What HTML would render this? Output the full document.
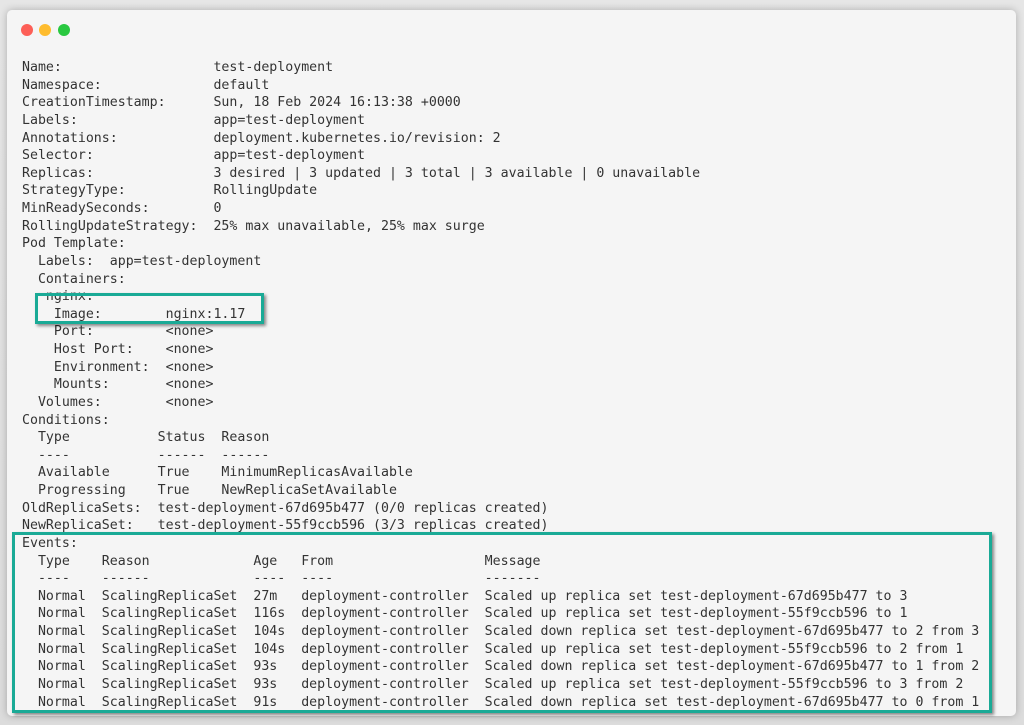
<!DOCTYPE html>
<html><head><style>
html,body{margin:0;padding:0;width:1024px;height:725px;overflow:hidden;background:linear-gradient(#e6e6e6,#dcdcdc);}
.win{position:absolute;left:7px;top:10px;width:1009px;height:706px;background:#f5f5f5;border-radius:5px;box-shadow:0 0 8px rgba(0,0,0,.25);}
.dot{position:absolute;top:14px;width:12px;height:12px;border-radius:50%;}
pre{position:absolute;left:15px;top:49px;margin:0;font-family:"DejaVu Sans Mono","Liberation Mono",monospace;font-size:13.25px;line-height:17.62px;color:#333;}
.box{position:absolute;border:3px solid #1aaa96;box-shadow:2px 2px 3px rgba(0,0,0,.45);}
</style></head><body>
<div class="win">
<div class="dot" style="left:14px;background:#fd5f57"></div>
<div class="dot" style="left:32px;background:#febc2e"></div>
<div class="dot" style="left:51px;background:#29c840"></div>
<pre>Name:                   test-deployment
Namespace:              default
CreationTimestamp:      Sun, 18 Feb 2024 16:13:38 +0000
Labels:                 app=test-deployment
Annotations:            deployment.kubernetes.io/revision: 2
Selector:               app=test-deployment
Replicas:               3 desired | 3 updated | 3 total | 3 available | 0 unavailable
StrategyType:           RollingUpdate
MinReadySeconds:        0
RollingUpdateStrategy:  25% max unavailable, 25% max surge
Pod Template:
  Labels:  app=test-deployment
  Containers:
   nginx:
    Image:        nginx:1.17
    Port:         &lt;none&gt;
    Host Port:    &lt;none&gt;
    Environment:  &lt;none&gt;
    Mounts:       &lt;none&gt;
  Volumes:        &lt;none&gt;
Conditions:
  Type           Status  Reason
  ----           ------  ------
  Available      True    MinimumReplicasAvailable
  Progressing    True    NewReplicaSetAvailable
OldReplicaSets:  test-deployment-67d695b477 (0/0 replicas created)
NewReplicaSet:   test-deployment-55f9ccb596 (3/3 replicas created)
Events:
  Type    Reason             Age   From                   Message
  ----    ------             ----  ----                   -------
  Normal  ScalingReplicaSet  27m   deployment-controller  Scaled up replica set test-deployment-67d695b477 to 3
  Normal  ScalingReplicaSet  116s  deployment-controller  Scaled up replica set test-deployment-55f9ccb596 to 1
  Normal  ScalingReplicaSet  104s  deployment-controller  Scaled down replica set test-deployment-67d695b477 to 2 from 3
  Normal  ScalingReplicaSet  104s  deployment-controller  Scaled up replica set test-deployment-55f9ccb596 to 2 from 1
  Normal  ScalingReplicaSet  93s   deployment-controller  Scaled down replica set test-deployment-67d695b477 to 1 from 2
  Normal  ScalingReplicaSet  93s   deployment-controller  Scaled up replica set test-deployment-55f9ccb596 to 3 from 2
  Normal  ScalingReplicaSet  91s   deployment-controller  Scaled down replica set test-deployment-67d695b477 to 0 from 1</pre>
</div>
<div class="box" style="left:35px;top:293px;width:223px;height:25px"></div>
<div class="box" style="left:12px;top:532px;width:974px;height:175px"></div>
</body></html>
